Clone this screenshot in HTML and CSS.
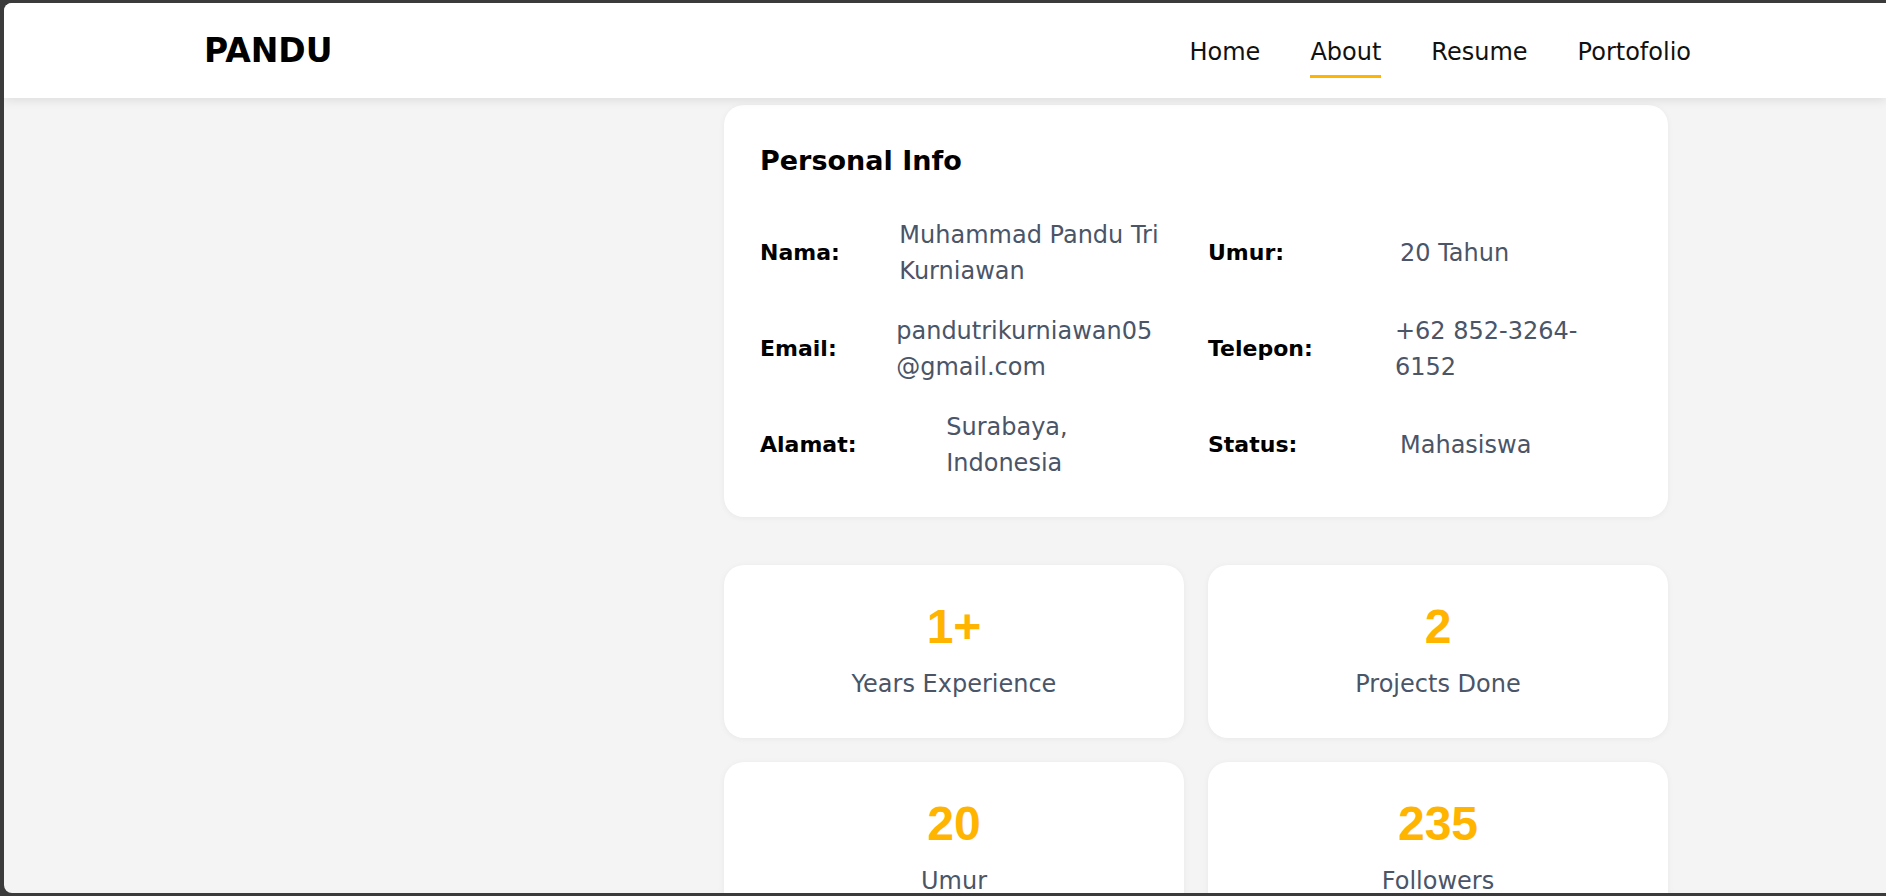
FILE: index.html
```html
<!DOCTYPE html>
<html lang="id">
<head>
<meta charset="utf-8">
<title>Pandu - About</title>
<link rel="stylesheet" href="styles.css">
</head>
<body>
<div class="window">
  <header class="site-header">
    <div class="header-inner">
      <div class="logo">PANDU</div>
      <nav class="nav">
        <a href="#" class="nav-link">Home</a>
        <a href="#" class="nav-link active">About</a>
        <a href="#" class="nav-link">Resume</a>
        <a href="#" class="nav-link">Portofolio</a>
      </nav>
    </div>
  </header>
  <main class="about">
    <aside class="about-side"></aside>
    <div class="about-content">
      <section class="card info-card">
        <h2 class="card-title">Personal Info</h2>
        <div class="info-grid">
          <div class="info-item"><span class="label">Nama:</span><span class="value">Muhammad Pandu Tri Kurniawan</span></div>
          <div class="info-item"><span class="label">Umur:</span><span class="value">20 Tahun</span></div>
          <div class="info-item"><span class="label">Email:</span><span class="value">pandutrikurniawan05<wbr>@gmail.com</span></div>
          <div class="info-item"><span class="label">Telepon:</span><span class="value">+62 852-3264-6152</span></div>
          <div class="info-item"><span class="label">Alamat:</span><span class="value">Surabaya, Indonesia</span></div>
          <div class="info-item"><span class="label">Status:</span><span class="value">Mahasiswa</span></div>
        </div>
      </section>
      <section class="stats">
        <div class="card stat"><div class="num">1+</div><div class="stat-label">Years Experience</div></div>
        <div class="card stat"><div class="num">2</div><div class="stat-label">Projects Done</div></div>
        <div class="card stat"><div class="num">20</div><div class="stat-label">Umur</div></div>
        <div class="card stat"><div class="num">235</div><div class="stat-label">Followers</div></div>
      </section>
    </div>
  </main>
</div>
</body>
</html>
```
FILE: styles.css
```css
* {
  box-sizing: border-box;
  margin: 0;
  padding: 0;
}

html,
body {
  height: 100%;
}

body {
  background: #3b3b3b;
  font-family: "DejaVu Sans", "Noto Sans", sans-serif;
  overflow: hidden;
  padding: 3px 0 3px 4px;
}

.window {
  height: 890px;
  background: #f4f4f4;
  border-radius: 8px 0 0 8px;
  overflow: hidden;
}

.site-header {
  position: relative;
  z-index: 1;
  height: 95px;
  background: #ffffff;
  box-shadow: 0 2px 10px rgba(0, 0, 0, 0.1);
}

.header-inner {
  height: 100%;
  display: flex;
  align-items: center;
  justify-content: space-between;
  padding: 0 195px 0 200px;
}

.logo {
  font-size: 33px;
  font-weight: 700;
  color: #000000;
}

.nav {
  display: flex;
  gap: 50px;
}

.nav-link {
  font-size: 24px;
  line-height: 36px;
  color: #111111;
  text-decoration: none;
  padding: 10px 0 5px;
  border-bottom: 3px solid transparent;
}

.nav-link.active {
  border-bottom-color: #ffb400;
}

.about {
  display: grid;
  grid-template-columns: 496px 944px;
  column-gap: 24px;
  padding: 7px 0 0 200px;
}

.card {
  background: #ffffff;
  border-radius: 20px;
  box-shadow: 0 1px 6px rgba(0, 0, 0, 0.05);
}

.info-card {
  padding: 36px;
}

.card-title {
  font-size: 27px;
  line-height: 40px;
  font-weight: 700;
  color: #000000;
  margin-bottom: 36px;
}

.info-grid {
  display: grid;
  grid-template-columns: 1fr 1fr;
  gap: 24px;
}

.info-item {
  display: flex;
  align-items: center;
  font-size: 24px;
  line-height: 36px;
}

.label {
  flex: 0 1 192px;
  font-size: 22px;
  font-weight: 700;
  color: #000000;
}

.value {
  color: #4a5568;
}

.stats {
  display: grid;
  grid-template-columns: 1fr 1fr;
  gap: 24px;
  margin-top: 48px;
}

.stat {
  padding: 36px;
  text-align: center;
}

.num {
  font-family: "Liberation Sans", Arial, sans-serif;
  font-size: 48px;
  line-height: 52px;
  font-weight: 700;
  color: #ffb400;
  margin-bottom: 13px;
}

.stat-label {
  font-size: 24px;
  line-height: 36px;
  color: #4a5568;
}
```
